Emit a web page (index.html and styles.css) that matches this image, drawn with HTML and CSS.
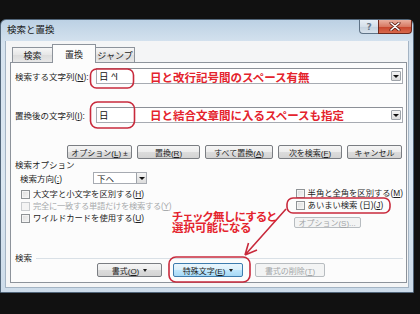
FILE: index.html
```html
<!DOCTYPE html>
<html lang="ja">
<head>
    <meta charset="UTF-8">
    <meta name="viewport" content="width=device-width, initial-scale=1.0">
    <title>検索と置換</title>
    <link rel="stylesheet" href="styles.css">
</head>
<body>
    <div class="screen">
        <div class="window">
            <div class="titlebar">
                <span class="title">検索と置換</span>
                <div class="caption-btns">
                    <span class="cap-btn help">?</span>
                    <span class="cap-btn close">
                        <svg width="12" height="9" viewBox="0 0 12 9">
                            <path d="M2 1 L10 8 M10 1 L2 8" stroke="#5a1a10" stroke-width="3" stroke-linecap="round"/>
                            <path d="M2 1 L10 8 M10 1 L2 8" stroke="#ffffff" stroke-width="1.6" stroke-linecap="round"/>
                        </svg>
                    </span>
                </div>
            </div>
            <div class="client">
                <div class="tabs">
                    <span class="tab tab-find">検索</span>
                    <span class="tab tab-replace active">置換</span>
                    <span class="tab tab-jump">ジャンプ</span>
                </div>
                <div class="panel">
                    <div class="field-row find-row">
                        <label class="field-label">検索する文字列(<u>N</u>):</label>
                        <div class="combo"><span class="combo-text">日 ^l</span><span class="drop-btn"></span></div>
                    </div>
                    <div class="field-row replace-row">
                        <label class="field-label">置換後の文字列(<u>I</u>):</label>
                        <div class="combo"><span class="combo-text">日</span><span class="drop-btn"></span></div>
                    </div>
                    <div class="action-row">
                        <button class="btn btn-options"><span>オプション(<u>L</u>) ±</span></button>
                        <button class="btn btn-replace"><span>置換(<u>R</u>)</span></button>
                        <button class="btn btn-all"><span>すべて置換(<u>A</u>)</span></button>
                        <button class="btn btn-next"><span>次を検索(<u>F</u>)</span></button>
                        <button class="btn btn-cancel"><span>キャンセル</span></button>
                    </div>
                    <div class="options">
                        <div class="opt-left">
                            <div class="group-label">検索オプション</div>
                            <div class="dir-row">
                                <span class="dir-label">検索方向(<u>:</u>)</span>
                                <div class="select"><span class="select-text">下へ</span><span class="drop-btn"></span></div>
                            </div>
                            <div class="check"><span class="box"></span><span class="check-text">大文字と小文字を区別する(<u>H</u>)</span></div>
                            <div class="check disabled"><span class="box"></span><span class="check-text">完全に一致する単語だけを検索する(<u>Y</u>)</span></div>
                            <div class="check"><span class="box"></span><span class="check-text">ワイルドカードを使用する(<u>U</u>)</span></div>
                        </div>
                        <div class="opt-right">
                            <div class="check"><span class="box"></span><span class="check-text">半角と全角を区別する(<u>M</u>)</span></div>
                            <div class="check"><span class="box"></span><span class="check-text">あいまい検索 (日)(<u>J</u>)</span></div>
                            <button class="btn btn-small disabled"><span>オプション(<u>S</u>)...</span></button>
                        </div>
                    </div>
                    <div class="section-label"><span>検索</span><span class="rule"></span></div>
                    <div class="bottom-row">
                        <button class="btn btn-format"><span>書式(<u>O</u>)</span><span class="tri"></span></button>
                        <button class="btn btn-special focused"><span>特殊文字(<u>E</u>)</span><span class="tri"></span></button>
                        <button class="btn btn-clear disabled"><span>書式の削除(<u>T</u>)</span></button>
                    </div>
                </div>
            </div>
        </div>

        <svg class="marks" width="420" height="314" viewBox="0 0 420 314">
            <rect x="90.5" y="69" width="43" height="19" rx="6"/>
            <rect x="90.5" y="102" width="44" height="26" rx="7"/>
            <rect x="287" y="198" width="103" height="15" rx="6"/>
            <rect x="169" y="257" width="81" height="25" rx="7"/>
            <path d="M286 209 L245 255 M245 255 L248.5 243 M245 255 L257 250"/>
        </svg>
        <div class="note note-find">日と改行記号間のスペース有無</div>
        <div class="note note-replace">日と結合文章間に入るスペースも指定</div>
        <div class="note note-check">チェック無しにすると<br>選択可能になる</div>
    </div>
</body>
</html>
```

FILE: styles.css
```css
* {
    box-sizing: border-box;
}
html, body {
    margin: 0;
    padding: 0;
}
body {
    width: 420px;
    height: 314px;
    overflow: hidden;
    background-color: #111111;
    font-family: "Liberation Sans", "Noto Sans CJK JP", sans-serif;
    font-size: 8.5px;
    color: #1e1e1e;
}
u {
    text-decoration: underline;
}
.screen {
    position: relative;
    height: 314px;
    padding-top: 19px;
}

/* window frame */
.window {
    width: 414px;
    height: 274px;
    display: flex;
    flex-direction: column;
    padding: 0 4px 4px;
    border: 1px solid #52667a;
    border-radius: 6px 6px 0 0;
    background: linear-gradient(#bcd1e4, #d6e3ef 24px, #dbe7f1 60%, #cddcea);
}
.titlebar {
    height: 21px;
    display: flex;
    justify-content: space-between;
    align-items: flex-start;
}
.title {
    margin: 4px 0 0 2px;
    font-size: 9.5px;
    line-height: 12px;
    color: #1a1a1a;
}
.caption-btns {
    display: flex;
    margin-right: -3px;
}
.cap-btn {
    height: 14px;
    display: flex;
    justify-content: center;
    align-items: center;
    border: 1px solid #5f7387;
    border-top: none;
}
.help {
    width: 19px;
    border-radius: 0 0 0 4px;
    border-right: none;
    background: linear-gradient(#e8eff6, #d5dfe9 50%, #c3d1de 51%, #d8e2ec);
    color: #6a7b8c;
    font-family: "DejaVu Sans", sans-serif;
    font-size: 9px;
    font-weight: bold;
}
.close {
    width: 34px;
    border-radius: 0 0 4px 0;
    border-color: #6e2a1e;
    background: linear-gradient(#eab0a0, #d77a64 50%, #c5432b 51%, #d9694c);
}

/* client area */
.client {
    flex: 1;
    display: flex;
    flex-direction: column;
    padding: 0 1px 4px 4px;
    background-color: #f4f5f6;
    border: 1px solid #a4b4c4;
    border-top: none;
}
.tabs {
    height: 21px;
    display: flex;
    align-items: flex-end;
    padding-left: 2px;
}
.tab {
    height: 15px;
    display: flex;
    justify-content: center;
    align-items: center;
    border: 1px solid #8d939b;
    border-bottom: none;
    background: linear-gradient(#f6f6f6, #e6e6e6 50%, #dcdcdc 51%, #e8e8e8);
    font-size: 9px;
}
.tab + .tab {
    margin-left: -1px;
}
.tab-find {
    width: 41px;
}
.tab-replace {
    width: 44px;
}
.tab-jump {
    width: 40px;
}
.tab.active {
    position: relative;
    z-index: 1;
    height: 19px;
    margin-bottom: -1px;
    background: #fcfcfc;
}
.panel {
    flex: 1;
    display: flex;
    flex-direction: column;
    padding: 0 3px 0 4px;
    border: 1px solid #8d939b;
    background-color: #fcfcfc;
}

/* text fields */
.field-row {
    height: 16px;
    display: flex;
    align-items: center;
}
.find-row {
    margin-top: 5px;
}
.replace-row {
    margin-top: 23px;
}
.field-label {
    width: 81px;
    white-space: nowrap;
}
.combo {
    flex: 1;
    height: 16px;
    display: flex;
    align-items: center;
    justify-content: space-between;
    padding: 0 1px 0 2px;
    border: 1px solid #a7abb2;
    border-top-color: #8c9097;
    background: #ffffff;
}
.combo-text {
    font-size: 9.5px;
    color: #111111;
}
.drop-btn {
    width: 10px;
    height: 10px;
    display: flex;
    justify-content: center;
    align-items: center;
    border: 1px solid #9ea3a9;
    border-radius: 1px;
    background: linear-gradient(#f4f4f4, #dcdcdc);
}
.drop-btn::after {
    content: "";
    border-left: 3px solid transparent;
    border-right: 3px solid transparent;
    border-top: 3px solid #111111;
}

/* buttons */
.btn {
    height: 14px;
    padding: 0;
    display: flex;
    justify-content: center;
    align-items: center;
    gap: 4px;
    border: 1px solid #7a7d82;
    border-radius: 2px;
    background: linear-gradient(#f5f5f5, #ececec 50%, #dcdcdc 51%, #d3d3d3);
    font-family: inherit;
    font-size: 8px;
    color: #1e1e1e;
    white-space: nowrap;
}
.btn.disabled {
    border-color: #b7bcc0;
    background: #f3f4f4;
    color: #a3a6a8;
}
.btn.focused {
    border-color: #3d7cae;
    background: linear-gradient(#eaf6fd, #d9f0fc 50%, #bee6fd 51%, #a7d9f5);
}
.tri {
    border-left: 2.5px solid transparent;
    border-right: 2.5px solid transparent;
    border-top: 3px solid #1e1e1e;
}
.action-row {
    height: 14px;
    margin-top: 22px;
    display: flex;
    justify-content: flex-end;
    gap: 5px;
    padding-right: 1px;
}
.btn-options {
    width: 65px;
}
.btn-replace {
    width: 63px;
}
.btn-all {
    width: 68px;
}
.btn-next {
    width: 64px;
}
.btn-cancel {
    width: 55px;
}

/* search options */
.options {
    height: 92px;
    display: flex;
}
.opt-left {
    width: 280px;
}
.opt-right {
    padding-top: 28px;
}
.group-label {
    height: 12px;
    line-height: 12px;
}
.dir-row {
    height: 12px;
    margin-top: 1px;
    padding-left: 5px;
    display: flex;
    align-items: center;
}
.dir-label {
    width: 73px;
}
.select {
    width: 54px;
    height: 12px;
    display: flex;
    align-items: center;
    justify-content: space-between;
    padding-left: 3px;
    border: 1px solid #a7abb2;
    background: #ffffff;
}
.select .drop-btn {
    height: 10px;
    border-right: none;
    border-top: none;
    border-bottom: none;
    border-radius: 0;
}
.opt-left .dir-row + .check {
    margin-top: 4px;
}
.check {
    height: 12px;
    display: flex;
    align-items: center;
    gap: 3px;
    white-space: nowrap;
}
.check-text {
    font-size: 8.3px;
    line-height: 9px;
}
.opt-left .check {
    padding-left: 6px;
}
.opt-right .check {
    padding-left: 2px;
}
.box {
    width: 9px;
    height: 9px;
    border: 1px solid #8f9396;
    background: linear-gradient(135deg, #dcdcdc, #f6f6f6);
    box-shadow: inset 0 0 0 1px #f4f4f4;
}
.check.disabled {
    color: #a8abad;
}
.check.disabled .check-text {
    letter-spacing: -0.3px;
}
.check.disabled .box {
    border-color: #c9cccf;
    background: #f4f4f4;
}
.btn-small {
    width: 67px;
    height: 11px;
    margin-top: 6px;
}

/* bottom section */
.section-label {
    height: 12px;
    display: flex;
    align-items: center;
    gap: 4px;
}
.rule {
    flex: 1;
    height: 1px;
    margin-top: 2px;
    background-color: #d9e0e6;
}
.bottom-row {
    height: 14px;
    display: flex;
    padding-left: 82px;
}
.btn-format {
    width: 65px;
}
.btn-special {
    width: 70px;
    margin-left: 11px;
}
.btn-clear {
    width: 70px;
    margin-left: 12px;
}

/* red annotations */
.marks {
    position: absolute;
    left: 0;
    top: 0;
    pointer-events: none;
}
.marks rect,
.marks path {
    fill: none;
    stroke: #c82a3c;
    stroke-width: 1.6;
}
.note {
    position: absolute;
    color: #e4232d;
    font-family: "Noto Sans CJK JP", sans-serif;
    font-weight: bold;
    font-size: 11.5px;
    line-height: 14px;
    white-space: nowrap;
}
.note-find {
    left: 150px;
    top: 70px;
}
.note-replace {
    left: 150px;
    top: 108px;
}
.note-check {
    left: 172px;
    top: 211px;
    line-height: 11px;
    font-feature-settings: "palt";
}
```
